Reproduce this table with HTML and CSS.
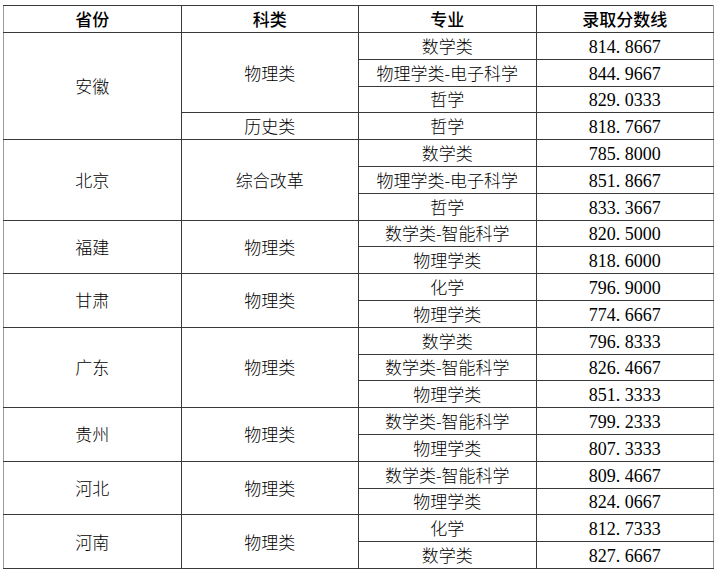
FILE: index.html
```html
<!DOCTYPE html>
<html lang="zh-CN">
<head>
<meta charset="utf-8">
<title>录取分数线</title>
<link rel="stylesheet" href="styles.css">
</head>
<body>
<table class="score-table">
  <colgroup><col class="c"><col class="c"><col class="c"><col class="c"></colgroup>
  <thead>
    <tr class="head"><th>省份</th><th>科类</th><th>专业</th><th>录取分数线</th></tr>
  </thead>
  <tbody>
    <tr><td rowspan="4">安徽</td><td rowspan="3">物理类</td><td>数学类</td><td class="num">814<span class="pt">.</span>8667</td></tr>
    <tr><td>物理学类-电子科学</td><td class="num">844<span class="pt">.</span>9667</td></tr>
    <tr><td>哲学</td><td class="num">829<span class="pt">.</span>0333</td></tr>
    <tr><td>历史类</td><td>哲学</td><td class="num">818<span class="pt">.</span>7667</td></tr>

    <tr><td rowspan="3">北京</td><td rowspan="3">综合改革</td><td>数学类</td><td class="num">785<span class="pt">.</span>8000</td></tr>
    <tr><td>物理学类-电子科学</td><td class="num">851<span class="pt">.</span>8667</td></tr>
    <tr><td>哲学</td><td class="num">833<span class="pt">.</span>3667</td></tr>

    <tr><td rowspan="2">福建</td><td rowspan="2">物理类</td><td>数学类-智能科学</td><td class="num">820<span class="pt">.</span>5000</td></tr>
    <tr><td>物理学类</td><td class="num">818<span class="pt">.</span>6000</td></tr>

    <tr><td rowspan="2">甘肃</td><td rowspan="2">物理类</td><td>化学</td><td class="num">796<span class="pt">.</span>9000</td></tr>
    <tr><td>物理学类</td><td class="num">774<span class="pt">.</span>6667</td></tr>

    <tr><td rowspan="3">广东</td><td rowspan="3">物理类</td><td>数学类</td><td class="num">796<span class="pt">.</span>8333</td></tr>
    <tr><td>数学类-智能科学</td><td class="num">826<span class="pt">.</span>4667</td></tr>
    <tr><td>物理学类</td><td class="num">851<span class="pt">.</span>3333</td></tr>

    <tr><td rowspan="2">贵州</td><td rowspan="2">物理类</td><td>数学类-智能科学</td><td class="num">799<span class="pt">.</span>2333</td></tr>
    <tr><td>物理学类</td><td class="num">807<span class="pt">.</span>3333</td></tr>

    <tr><td rowspan="2">河北</td><td rowspan="2">物理类</td><td>数学类-智能科学</td><td class="num">809<span class="pt">.</span>4667</td></tr>
    <tr><td>物理学类</td><td class="num">824<span class="pt">.</span>0667</td></tr>

    <tr><td rowspan="2">河南</td><td rowspan="2">物理类</td><td>化学</td><td class="num">812<span class="pt">.</span>7333</td></tr>
    <tr><td>数学类</td><td class="num">827<span class="pt">.</span>6667</td></tr>
  </tbody>
</table>
</body>
</html>
```

FILE: styles.css
```css
html, body {
  margin: 0;
  padding: 0;
  background: #ffffff;
}

body {
  padding: 5px 0 0 3px;
  font-family: "Noto Sans CJK SC", "Noto Sans", sans-serif;
  color: #000;
}

.score-table {
  border-collapse: collapse;
  table-layout: fixed;
  width: 711px;
  border-left: 1px solid #999;
  border-right: 1px solid #999;
}

.score-table .c {
  width: 25%;
}

.score-table th,
.score-table td {
  border: 1px solid #3a3a3a;
  padding: 0;
  text-align: center;
  vertical-align: middle;
  font-size: 17px;
  line-height: 20px;
  font-weight: 300;
  white-space: nowrap;
}

.score-table th:first-child,
.score-table td:first-child {
  border-left-color: #999;
}

.score-table tr > :last-child {
  border-right-color: #999;
}

.score-table .head th {
  height: 26px;
  font-weight: 500;
}

.score-table tbody tr {
  height: 26.8px;
}

.score-table .num {
  font-family: "Liberation Serif", serif;
  font-size: 18px;
  font-weight: 400;
  padding-top: 2px;
}

.score-table .pt {
  display: inline-block;
  width: 0.5em;
  text-align: left;
}
```
